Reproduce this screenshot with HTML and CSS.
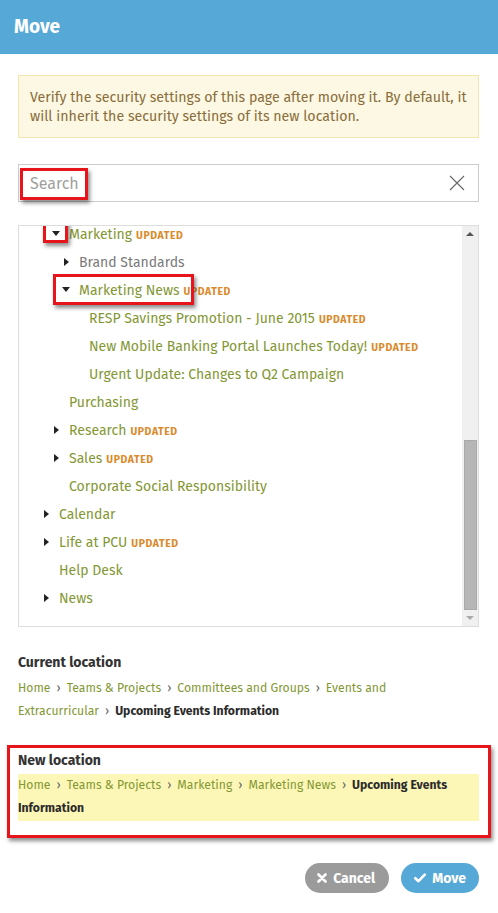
FILE: index.html
```html
<!DOCTYPE html>
<html>
<head>
<meta charset="utf-8">
<link rel="stylesheet" href="styles.css">
</head>
<body>
<div class="dialog">
  <header class="header">Move</header>
  <div class="content">
    <div class="alert">Verify the security settings of this page after moving it. By default, it will inherit the security settings of its new location.</div>

    <div class="search">
      <span class="placeholder">Search</span>
      <svg class="clear" width="16" height="16" viewBox="0 0 16 16"><path d="M1 1L15 15M15 1L1 15" stroke="#666" stroke-width="1.1" fill="none"/></svg>
      <span class="mark mark-search"></span>
    </div>

    <div class="tree">
      <ul class="rows">
        <li class="row l2"><span class="tw open"></span><span class="lk">Marketing</span><span class="upd">UPDATED</span><span class="mark mark-arrow"></span></li>
        <li class="row l3"><span class="tw"></span><span class="lk gray">Brand Standards</span></li>
        <li class="row l3"><span class="tw open"></span><span class="lk">Marketing News</span><span class="upd">UPDATED</span><span class="mark mark-news"></span></li>
        <li class="row l4"><span class="lk">RESP Savings Promotion - June 2015</span><span class="upd">UPDATED</span></li>
        <li class="row l4"><span class="lk">New Mobile Banking Portal Launches Today!</span><span class="upd">UPDATED</span></li>
        <li class="row l4"><span class="lk">Urgent Update: Changes to Q2 Campaign</span></li>
        <li class="row l2 leaf"><span class="lk">Purchasing</span></li>
        <li class="row l2"><span class="tw"></span><span class="lk">Research</span><span class="upd">UPDATED</span></li>
        <li class="row l2"><span class="tw"></span><span class="lk">Sales</span><span class="upd">UPDATED</span></li>
        <li class="row l2 leaf"><span class="lk">Corporate Social Responsibility</span></li>
        <li class="row l1"><span class="tw"></span><span class="lk">Calendar</span></li>
        <li class="row l1"><span class="tw"></span><span class="lk">Life at PCU</span><span class="upd">UPDATED</span></li>
        <li class="row l1 leaf"><span class="lk">Help Desk</span></li>
        <li class="row l1"><span class="tw"></span><span class="lk">News</span></li>
      </ul>
      <div class="scrollbar">
        <span class="sb-up"></span>
        <span class="sb-track"><span class="sb-thumb"></span></span>
        <span class="sb-down"></span>
      </div>
    </div>

    <section class="loc">
      <h3 class="loc-title">Current location</h3>
      <p class="crumbs"><a>Home</a><span class="sep">›</span><a>Teams &amp; Projects</a><span class="sep">›</span><a>Committees and Groups</a><span class="sep">›</span><a>Events and</a> <a>Extracurricular</a><span class="sep">›</span><b>Upcoming Events Information</b></p>
    </section>

    <section class="loc loc-new">
      <h3 class="loc-title">New location</h3>
      <p class="crumbs hl"><a>Home</a><span class="sep">›</span><a>Teams &amp; Projects</a><span class="sep">›</span><a>Marketing</a><span class="sep">›</span><a>Marketing News</a><span class="sep">›</span><b>Upcoming Events</b> <b>Information</b></p>
      <span class="mark mark-new"></span>
    </section>

    <div class="actions">
      <button class="btn btn-cancel"><svg width="10" height="10" viewBox="0 0 10 10"><path d="M1.5 1.5L8.5 8.5M8.5 1.5L1.5 8.5" stroke="#fff" stroke-width="2.6" stroke-linecap="round"/></svg>Cancel</button>
      <button class="btn btn-move"><svg width="12" height="10" viewBox="0 0 12 10"><path d="M1.3 5.2L4.5 8.2L10.8 1.6" stroke="#fff" stroke-width="2.6" fill="none" stroke-linecap="round" stroke-linejoin="round"/></svg>Move</button>
    </div>
  </div>
</div>
</body>
</html>
```

FILE: styles.css
```css
* { box-sizing: border-box; }
html, body { margin: 0; padding: 0; background: #fff; }
body {
  font-family: "Fira Sans", Lato, "Open Sans", sans-serif;
  font-size: 14px;
  color: #333;
  width: 498px;
  height: 913px;
  overflow: hidden;
}
.header {
  background: #56a8d6;
  color: #fff;
  font-weight: 700;
  font-size: 19px;
  height: 54px;
  line-height: 54px;
  padding-left: 14px;
}
.content { padding: 21px 19px 0 18px; }
.alert {
  background: #fcf8e3;
  border: 1px solid #f4e4ad;
  color: #8a6d3b;
  font-size: 14.2px;
  line-height: 19px;
  padding: 12px 11px 11px 11px;
}
.search {
  position: relative;
  margin-top: 26px;
  height: 38px;
  border: 1px solid #ccc;
  display: flex;
  align-items: center;
  justify-content: space-between;
  padding: 0 13px 0 11px;
}
.placeholder { color: #a0a0a0; font-size: 16px; }
.clear { display: block; }
.mark {
  position: absolute;
  border: 3px solid #e8141b;
  box-shadow: 2px 3px 4px rgba(0,0,0,0.45);
  pointer-events: none;
}
.mark-search { left: 1px; top: 3px; width: 68px; height: 32px; }
.tree {
  margin-top: 23px;
  height: 402px;
  border: 1px solid #ddd;
  display: flex;
  overflow: hidden;
}
.rows {
  list-style: none;
  margin: -6px 0 0 0;
  padding: 0;
  flex: 1;
}
.row {
  position: relative;
  height: 28px;
  display: flex;
  align-items: center;
  white-space: nowrap;
}
.l1 { padding-left: 23px; }
.l2 { padding-left: 33px; }
.l3 { padding-left: 43px; }
.l4 { padding-left: 70px; }
.l1.leaf { padding-left: 40px; }
.l2.leaf { padding-left: 50px; }
.tw {
  width: 17px;
  height: 10px;
  flex: none;
  position: relative;
}
.tw::before {
  content: "";
  position: absolute;
  left: 2px; top: 1px;
  border-left: 5px solid #222;
  border-top: 4px solid transparent;
  border-bottom: 4px solid transparent;
}
.tw.open::before {
  left: 0; top: 2px;
  border-top: 5px solid #222;
  border-left: 4px solid transparent;
  border-right: 4px solid transparent;
  border-bottom: 0;
}
.lk { color: #849735; font-size: 14px; }
.lk.gray { color: #7a7a7a; }
.upd {
  color: #d98a2c;
  font-size: 10.4px;
  font-weight: 700;
  letter-spacing: 0.6px;
  margin-left: 4px;
  margin-top: 2px;
}
.mark-arrow { left: 24px; top: 0px; width: 25px; height: 23px; }
.mark-news { left: 34px; top: -2px; width: 141px; height: 31px; }
.scrollbar {
  width: 16px;
  flex: none;
  background: #f0f0f0;
  display: flex;
  flex-direction: column;
  align-items: center;
}
.sb-up, .sb-down {
  height: 16px;
  width: 16px;
  flex: none;
  position: relative;
}
.sb-up::before {
  content: "";
  position: absolute;
  left: 4px; top: 6px;
  border-bottom: 4px solid #555;
  border-left: 4px solid transparent;
  border-right: 4px solid transparent;
}
.sb-down::before {
  content: "";
  position: absolute;
  left: 4px; top: 6px;
  border-top: 4px solid #aaa;
  border-left: 4px solid transparent;
  border-right: 4px solid transparent;
}
.sb-track {
  flex: 1;
  width: 16px;
  display: flex;
  flex-direction: column;
  justify-content: flex-end;
  align-items: center;
}
.sb-thumb {
  width: 13px;
  height: 170px;
  background: #b6b6b6;
  border: 1px solid #a9a9a9;
}
.loc { position: relative; margin-top: 26px; }
.loc-title {
  margin: 0;
  font-size: 14px;
  font-weight: 700;
  color: #333;
  line-height: 20px;
}
.crumbs {
  margin: 4px 0 0 0;
  font-size: 12.2px;
  line-height: 23px;
  color: #849735;
}
.crumbs a { color: #849735; }
.crumbs b { color: #2b2b2b; font-weight: 700; }
.sep { color: #666; margin: 0 6px; }
.loc-new { margin-top: 28px; }
.crumbs.hl { background: #fdf7b7; margin-top: 3px; padding-bottom: 1px; }
.mark-new { left: -11px; top: -6px; width: 484px; height: 93px; }
.actions {
  margin-top: 42px;
  display: flex;
  justify-content: flex-end;
  gap: 12px;
}
.btn {
  border: 0;
  border-radius: 16px;
  color: #fff;
  font-family: inherit;
  font-weight: 700;
  font-size: 14px;
  height: 30px;
  display: flex;
  align-items: center;
  gap: 6px;
  padding: 0 14px 0 12px;
}
.btn-cancel { background: #9b9b9b; }
.btn-move { background: #56a8d6; padding: 0 13px 0 13px; }
```
